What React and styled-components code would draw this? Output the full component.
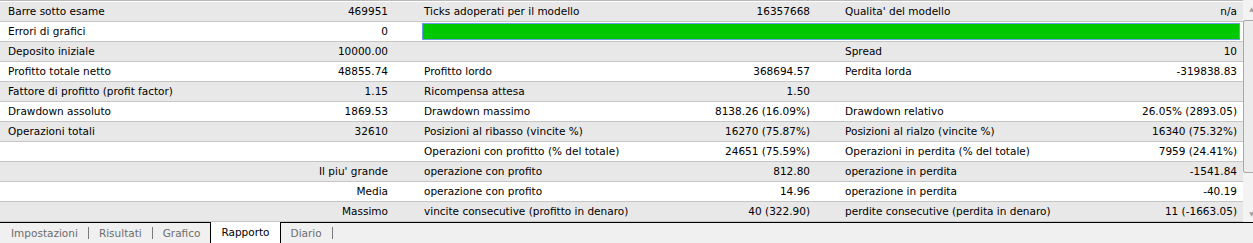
import React from "react";
import styled, { createGlobalStyle } from "styled-components";

const GlobalStyle = createGlobalStyle`
    html, body {
        margin: 0;
        padding: 0;
        background: #ffffff;
        overflow: hidden;
    }
    body {
        font-family: "DejaVu Sans", "Liberation Sans", sans-serif;
        font-size: 10.5px;
        color: #000000;
    }
`

const Window = styled.div`
    width: 1253px;
    height: 243px;
    display: flex;
    flex-direction: column;
    overflow: hidden;
`

const Body = styled.div`
    display: flex;
    height: 222px;
`

const Table = styled.div`
    width: 1243px;
    flex: none;
    border-top: 1px solid #b9b9b9;
    padding-top: 1px;
    display: flex;
    flex-direction: column;
`

const Row = styled.div`
    display: grid;
    grid-template-columns: 410px 422px 411px;
    height: 19px;
    border-bottom: 1px solid #c6c6c6;
    background: ${(p) => (p.$shade ? "#e8e8e8" : "#ffffff")};
`

const PAD = [
    { left: 8, right: 22 },
    { left: 14, right: 22 },
    { left: 13, right: 6 },
]

const Pair = styled.div`
    display: flex;
    justify-content: space-between;
    align-items: center;
    padding-left: ${(p) => PAD[p.$col].left}px;
    padding-right: ${(p) => PAD[p.$col].right}px;
    line-height: 19px;
    white-space: nowrap;
`

const Label = styled.span``

const Value = styled.span`
    text-align: right;
`

const Bar = styled.div`
    grid-column: 2 / 4;
    margin: 1px 3px 1px 12px;
    background: #00c800;
    border: 1px solid #6b9fe4;
`

const Scroll = styled.div`
    width: 17px;
    flex: none;
    background: #f3f3f3;
    display: flex;
    flex-direction: column;
    align-items: stretch;
`

const Arrow = styled.div`
    height: 17px;
    display: flex;
    align-items: center;
    justify-content: center;
    color: #a0a0a0;
    font-size: 6px;
`

const Track = styled.div`
    flex: 1;
    display: flex;
    flex-direction: column;
`

const Thumb = styled.div`
    margin-top: 3px;
    height: 151px;
    margin-right: 1px;
    border: 1px solid #a8a8a8;
    border-radius: 2px;
    background: #ececec;
`

const TabBar = styled.div`
    height: 20px;
    border-top: 1px solid #000000;
    background: #f0f0f0;
    display: flex;
    align-items: stretch;
    padding-left: 1px;
`

const Tab = styled.div`
    padding: 0 10px;
    display: flex;
    align-items: center;
    color: ${(p) => (p.$active ? "#000000" : "#6d6d6d")};
    background: ${(p) => (p.$active ? "#ffffff" : "transparent")};
    border-left: ${(p) => (p.$active ? "1px solid #000000" : "none")};
    border-right: ${(p) => (p.$active ? "1px solid #000000" : "none")};
    margin-top: ${(p) => (p.$active ? "-1px" : "0")};
    padding-bottom: 1px;
`

const Sep = styled.div`
    width: 1px;
    height: 12px;
    align-self: center;
    margin-top: -1px;
    background: #7a7a7a;
`

const rows = [
    [["Barre sotto esame", "469951"], ["Ticks adoperati per il modello", "16357668"], ["Qualita' del modello", "n/a"]],
    "bar",
    [["Deposito iniziale", "10000.00"], ["", ""], ["Spread", "10"]],
    [["Profitto totale netto", "48855.74"], ["Profitto lordo", "368694.57"], ["Perdita lorda", "-319838.83"]],
    [["Fattore di profitto (profit factor)", "1.15"], ["Ricompensa attesa", "1.50"], ["", ""]],
    [["Drawdown assoluto", "1869.53"], ["Drawdown massimo", "8138.26 (16.09%)"], ["Drawdown relativo", "26.05% (2893.05)"]],
    [["Operazioni totali", "32610"], ["Posizioni al ribasso (vincite %)", "16270 (75.87%)"], ["Posizioni al rialzo (vincite %)", "16340 (75.32%)"]],
    [["", ""], ["Operazioni con profitto (% del totale)", "24651 (75.59%)"], ["Operazioni in perdita (% del totale)", "7959 (24.41%)"]],
    [["", "Il piu' grande"], ["operazione con profito", "812.80"], ["operazione in perdita", "-1541.84"]],
    [["", "Media"], ["operazione con profito", "14.96"], ["operazione in perdita", "-40.19"]],
    [["", "Massimo"], ["vincite consecutive (profitto in denaro)", "40 (322.90)"], ["perdite consecutive (perdita in denaro)", "11 (-1663.05)"]],
]

const tabs = [
    { name: "Impostazioni", sep: true },
    { name: "Risultati", sep: true },
    { name: "Grafico", sep: false },
    { name: "Rapporto", active: true },
    { name: "Diario", sep: true },
]

const App = () => {
    return (
        <Window>
            <GlobalStyle />
            <Body>
                <Table>
                    {rows.map((row, i) => (
                        <Row key={i} $shade={i % 2 === 0}>
                            {row === "bar" ? (
                                <>
                                    <Pair $col={0}>
                                        <Label>Errori di grafici</Label>
                                        <Value>0</Value>
                                    </Pair>
                                    <Bar />
                                </>
                            ) : (
                                row.map((cell, j) => (
                                    <Pair key={j} $col={j}>
                                        <Label>{cell[0]}</Label>
                                        <Value>{cell[1]}</Value>
                                    </Pair>
                                ))
                            )}
                        </Row>
                    ))}
                </Table>
                <Scroll>
                    <Arrow>▲</Arrow>
                    <Track>
                        <Thumb />
                    </Track>
                    <Arrow>▼</Arrow>
                </Scroll>
            </Body>
            <TabBar>
                {tabs.map((t) => (
                    <React.Fragment key={t.name}>
                        <Tab $active={t.active}>{t.name}</Tab>
                        {t.sep && <Sep />}
                    </React.Fragment>
                ))}
            </TabBar>
        </Window>
    )
}

export default App
